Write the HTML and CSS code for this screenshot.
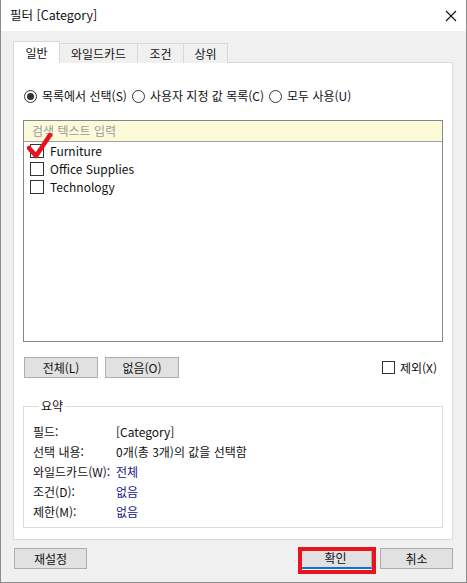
FILE: index.html
```html
<!DOCTYPE html>
<html lang="ko">
<head>
<meta charset="utf-8">
<title>필터 [Category]</title>
<link rel="stylesheet" href="styles.css">
</head>
<body>
<div class="window">
  <div class="titlebar">
    <span class="title">필터 [Category]</span>
    <svg class="close" width="12" height="12" viewBox="0 0 12 12"><path d="M1 1 L11 11 M11 1 L1 11" stroke="#111" stroke-width="1.1" fill="none"/></svg>
  </div>
  <div class="body">
    <div class="tabs">
      <div class="tab active">일반</div>
      <div class="tab w78">와일드카드</div>
      <div class="tab w46">조건</div>
      <div class="tab w44">상위</div>
    </div>
    <div class="panel">
      <div class="radios">
        <label class="radio"><span class="dot on"></span>목록에서 선택(S)</label>
        <label class="radio"><span class="dot"></span>사용자 지정 값 목록(C)</label>
        <label class="radio"><span class="dot"></span>모두 사용(U)</label>
      </div>
      <div class="list">
        <div class="search">검색 텍스트 입력</div>
        <div class="item"><span class="box"></span>Furniture</div>
        <div class="item"><span class="box"></span>Office Supplies</div>
        <div class="item"><span class="box"></span>Technology</div>
        <svg class="tick" width="32" height="32" viewBox="0 0 32 32"><path d="M5 17 L12 25 L26 4" stroke="#e3141c" stroke-width="4.5" fill="none" stroke-linecap="round" stroke-linejoin="round"/></svg>
      </div>
      <div class="actions">
        <button class="btn">전체(L)</button>
        <button class="btn">없음(O)</button>
        <label class="exclude"><span class="box"></span>제외(X)</label>
      </div>
      <fieldset class="summary">
        <legend>요약</legend>
        <div class="row"><span class="key">필드:</span><span class="val">[Category]</span></div>
        <div class="row"><span class="key">선택 내용:</span><span class="val">0개(총 3개)의 값을 선택함</span></div>
        <div class="row"><span class="key">와일드카드(W):</span><span class="val link">전체</span></div>
        <div class="row"><span class="key">조건(D):</span><span class="val link">없음</span></div>
        <div class="row"><span class="key">제한(M):</span><span class="val link">없음</span></div>
      </fieldset>
    </div>
    <div class="footer">
      <button class="btn wide">재설정</button>
      <div class="spacer"></div>
      <div class="okwrap">
        <button class="btn wide ok">확인</button>
        <div class="highlight"></div>
      </div>
      <button class="btn wide">취소</button>
    </div>
  </div>
</div>
</body>
</html>
```
FILE: styles.css
```css
* { box-sizing: border-box; }
html, body { margin: 0; padding: 0; }
body {
  font-family: "Noto Sans CJK KR", "Noto Sans", sans-serif;
  font-size: 12px;
  color: #111;
  background: #fff;
}
.window {
  width: 467px;
  height: 583px;
  border: 1px solid #8c8c8c;
  border-top: none;
  display: flex;
  flex-direction: column;
  background: #f0f0f0;
  overflow: hidden;
}
.titlebar {
  height: 31px;
  background: #fff;
  display: flex;
  align-items: center;
  justify-content: space-between;
  padding: 0 9px 0 9px;
  flex: none;
}
.title { font-size: 12.5px; line-height: 1; }
.close { margin-right: 0; }
.body {
  flex: 1;
  padding: 10px 13px 0 12px;
  display: flex;
  flex-direction: column;
}
.tabs {
  display: flex;
  align-items: flex-end;
  height: 22px;
  position: relative;
  z-index: 1;
  margin-bottom: -1px;
}
.tab {
  height: 20px;
  border: 1px solid #d9d9d9;
  border-bottom: none;
  border-left: none;
  background: #f0f0f0;
  display: flex;
  align-items: center;
  justify-content: center;
  line-height: 1;
}
.tab.active {
  width: 47px;
  height: 22px;
  background: #fff;
  border-left: 1px solid #d9d9d9;
}
.w78 { width: 78px; }
.w46 { width: 46px; }
.w44 { width: 44px; }
.panel {
  width: 440px;
  height: 478px;
  background: #fff;
  border: 1px solid #d9d9d9;
  padding: 25px 9px 0 9px;
  display: flex;
  flex-direction: column;
}
.radios {
  display: flex;
  align-items: center;
  height: 16px;
  padding-left: 1px;
  gap: 5px;
}
.radio {
  display: flex;
  align-items: center;
  gap: 5px;
  line-height: 1;
  white-space: nowrap;
}
.dot {
  width: 13px;
  height: 13px;
  border: 1px solid #333;
  border-radius: 50%;
  display: inline-flex;
  align-items: center;
  justify-content: center;
  background: #fff;
}
.dot.on::after {
  content: "";
  width: 7px;
  height: 7px;
  border-radius: 50%;
  background: #333;
}
.list {
  margin-top: 16px;
  width: 420px;
  height: 222px;
  border: 1px solid #828790;
  position: relative;
  flex: none;
}
.search {
  height: 21px;
  background: #fcfad9;
  border-bottom: 1px solid #a0a0a0;
  color: #9a9a9a;
  padding-left: 8px;
  display: flex;
  align-items: center;
  line-height: 1;
}
.item {
  height: 18px;
  display: flex;
  align-items: center;
  padding-left: 6px;
  gap: 6px;
  line-height: 1;
}
.box {
  width: 14px;
  height: 14px;
  border: 1px solid #333;
  background: #fff;
  flex: none;
}
.tick {
  position: absolute;
  left: 0;
  top: 10px;
}
.actions {
  margin-top: 15px;
  display: flex;
  align-items: center;
  height: 21px;
  width: 420px;
  padding-left: 1px;
}
.btn {
  font-family: inherit;
  font-size: 12px;
  width: 74px;
  height: 21px;
  background: #e1e1e1;
  border: 1px solid #adadad;
  padding: 0;
  margin: 0;
  color: #111;
  line-height: 1;
}
.actions .btn + .btn { margin-left: 7px; }
.exclude {
  margin-left: auto;
  margin-right: 6px;
  display: flex;
  align-items: center;
  gap: 5px;
  line-height: 1;
}
.exclude .box { width: 13px; height: 13px; }
.summary {
  margin: 22px 0 0 0;
  width: 420px;
  height: 128px;
  border: 1px solid #dcdcdc;
  padding: 10px 0 0 9px;
  flex: none;
}
.summary legend {
  padding: 0 2px;
  margin-left: 6px;
  line-height: 1;
}
.row {
  display: flex;
  height: 20px;
  align-items: center;
  line-height: 1;
}
.key { width: 83px; flex: none; }
.link { color: #14148c; }
.footer {
  display: flex;
  align-items: flex-start;
  margin-top: 8px;
  height: 28px;
  padding-left: 1px;
}
.btn.wide { width: 73px; }
.spacer { flex: 1; }
.okwrap {
  position: relative;
  width: 73px;
  height: 21px;
  margin-right: 8px;
}
.ok {
  border: 1px solid #adadad;
  border-bottom: 2px solid #0078d7;
}
.highlight {
  position: absolute;
  left: -1px;
  top: -1px;
  width: 78px;
  height: 27px;
  border: 4px solid #e8141e;
}
```
